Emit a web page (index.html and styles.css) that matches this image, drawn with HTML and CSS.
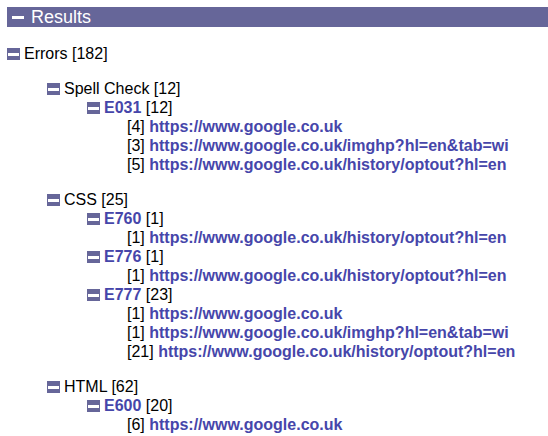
FILE: index.html
```html
<!DOCTYPE html>
<html>
<head>
<meta charset="utf-8">
<link rel="stylesheet" href="styles.css">
</head>
<body>
<div class="header"><span class="hicon"></span><span class="htitle">Results</span></div>
<ul class="tree root">
  <li class="group top">
    <div class="row"><span class="icon"></span><span>Errors [182]</span></div>
    <ul class="tree">
      <li class="group">
        <div class="row"><span class="icon"></span><span>Spell Check [12]</span></div>
        <ul class="tree">
          <li>
            <div class="row"><span class="icon"></span><span><a class="code">E031</a> [12]</span></div>
            <ul class="tree leaves">
              <li class="row">[4] <a class="url">https://www.google.co.uk</a></li>
              <li class="row">[3] <a class="url">https://www.google.co.uk/imghp?hl=en&amp;tab=wi</a></li>
              <li class="row">[5] <a class="url">https://www.google.co.uk/history/optout?hl=en</a></li>
            </ul>
          </li>
        </ul>
      </li>
      <li class="group">
        <div class="row"><span class="icon"></span><span>CSS [25]</span></div>
        <ul class="tree">
          <li>
            <div class="row"><span class="icon"></span><span><a class="code">E760</a> [1]</span></div>
            <ul class="tree leaves">
              <li class="row">[1] <a class="url">https://www.google.co.uk/history/optout?hl=en</a></li>
            </ul>
          </li>
          <li>
            <div class="row"><span class="icon"></span><span><a class="code">E776</a> [1]</span></div>
            <ul class="tree leaves">
              <li class="row">[1] <a class="url">https://www.google.co.uk/history/optout?hl=en</a></li>
            </ul>
          </li>
          <li>
            <div class="row"><span class="icon"></span><span><a class="code">E777</a> [23]</span></div>
            <ul class="tree leaves">
              <li class="row">[1] <a class="url">https://www.google.co.uk</a></li>
              <li class="row">[1] <a class="url">https://www.google.co.uk/imghp?hl=en&amp;tab=wi</a></li>
              <li class="row">[21] <a class="url">https://www.google.co.uk/history/optout?hl=en</a></li>
            </ul>
          </li>
        </ul>
      </li>
      <li class="group">
        <div class="row"><span class="icon"></span><span>HTML [62]</span></div>
        <ul class="tree">
          <li>
            <div class="row"><span class="icon"></span><span><a class="code">E600</a> [20]</span></div>
            <ul class="tree leaves">
              <li class="row">[6] <a class="url">https://www.google.co.uk</a></li>
            </ul>
          </li>
        </ul>
      </li>
    </ul>
  </li>
</ul>
</body>
</html>
```
FILE: styles.css
```css
html, body {
  margin: 0;
  padding: 0;
  background: #ffffff;
}
body {
  padding: 7px 0 0 7px;
  font-family: "Liberation Sans", Arial, sans-serif;
  font-size: 16px;
  color: #000000;
  overflow: hidden;
}
.header {
  height: 20px;
  background: #666699;
  display: flex;
  align-items: center;
  color: #ffffff;
}
.hicon {
  width: 12px;
  height: 3px;
  background: #ffffff;
  margin-left: 5px;
  margin-right: 7px;
}
.htitle {
  font-size: 18px;
  line-height: 20px;
}
.tree {
  list-style: none;
  margin: 0;
  padding: 0 0 0 40px;
}
.tree.root {
  padding-left: 0;
  margin-top: 17px;
}
.tree li {
  margin: 0;
  padding: 0;
}
.group {
  margin-bottom: 16px !important;
}
.group.top {
  margin-bottom: 0 !important;
}
.top > .row {
  margin-bottom: 16px;
}
.row {
  display: flex;
  align-items: center;
  line-height: 19px;
  height: 19px;
  white-space: pre;
}
.leaves .row {
  display: block;
}
.icon {
  width: 13px;
  height: 12px;
  background: #666699;
  margin-right: 4px;
  position: relative;
  flex: none;
}
.icon::after {
  content: "";
  position: absolute;
  left: 1px;
  right: 1px;
  top: 5px;
  height: 3px;
  background: #ffffff;
}
.code, .url {
  color: #4646aa;
  font-weight: bold;
  text-decoration: none;
}
```
